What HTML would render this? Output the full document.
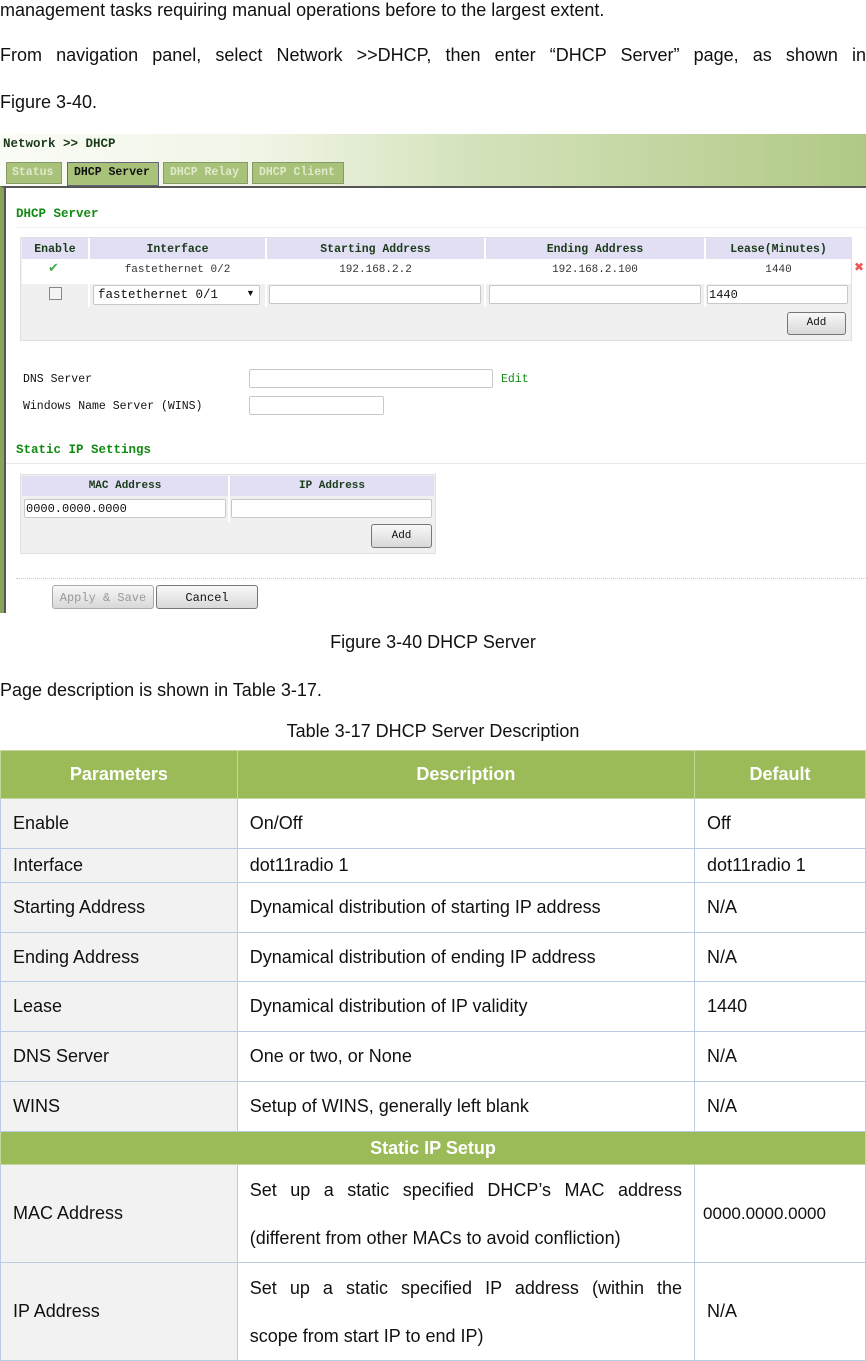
<!DOCTYPE html><html><head><meta charset="utf-8"><style>
*{margin:0;padding:0;box-sizing:border-box}
body{width:866px;height:1347px;overflow:hidden;background:#fff;position:relative;font-family:"Liberation Sans",sans-serif;color:#111}
.a{position:absolute;white-space:nowrap}
.t{font-size:18px}
.m{font-family:"Liberation Mono",monospace;font-size:11.5px}
.b{font-weight:bold}
.g{color:#138a13}
.inp{position:absolute;background:#fff;border:1px solid #c8c8c8;border-radius:2px}
.btn{position:absolute;border:1px solid #777;border-radius:3px;background:linear-gradient(#f8f8f8,#d8d8d8);font-family:"Liberation Mono",monospace;font-size:11px;text-align:center}
table.d{position:absolute;left:0;top:750px;width:866px;border-collapse:collapse;font-size:18px}
table.d td{border:1px solid #b8cce4;padding:0 12px;vertical-align:middle}
table.d td:first-child{background:#f2f2f2}
table.d tr.h td{background:#9bbb59;color:#fff;font-weight:bold;text-align:center;border-color:#c3d69b}
</style></head><body>
<div class="a t" style="left:0;top:0">management tasks requiring manual operations before to the largest extent.</div>
<div class="a t" style="left:0;top:45px;width:866px;text-align:justify;text-align-last:justify;word-spacing:2px">From navigation panel, select Network &gt;&gt;DHCP, then enter “DHCP Server” page, as shown in</div>
<div class="a t" style="left:0;top:92px">Figure 3-40.</div>

<div class="a" style="left:0;top:134px;width:866px;height:52px;background:linear-gradient(90deg,#fafcf6 0%,#f0f5e6 30%,#d4e2bb 55%,#b0c985 100%)"></div>
<div class="a m b" style="left:3px;top:137px;color:#1a3a1a;font-size:12.5px">Network &gt;&gt; DHCP</div>
<div class="a m b" style="left:6px;top:162px;width:56px;height:22px;background:#a8c27a;border:1px solid #889a66;color:#e0ead0;padding:3px 0 0 5px">Status</div>
<div class="a m b" style="left:67px;top:162px;width:92px;height:24px;background:#a8c27a;border:1px solid #667;color:#111;padding:3px 0 0 6px">DHCP Server</div>
<div class="a m b" style="left:163px;top:162px;width:85px;height:22px;background:#a8c27a;border:1px solid #889a66;color:#dfe9cc;padding:3px 0 0 6px">DHCP Relay</div>
<div class="a m b" style="left:252px;top:162px;width:92px;height:22px;background:#a8c27a;border:1px solid #889a66;color:#dfe9cc;padding:3px 0 0 6px">DHCP Client</div>
<div class="a" style="left:0;top:186px;width:866px;height:427px;border-top:2px solid #555;border-left:4px solid #8aa35a"></div>
<div class="a" style="left:4px;top:188px;width:2px;height:425px;background:#555"></div>
<div class="a m b g" style="left:16px;top:207px;font-size:12.5px">DHCP Server</div>
<div class="a" style="left:16px;top:227px;width:850px;height:1px;background:#eee"></div>
<div class="a" style="left:20px;top:237px;width:832px;height:104px;background:#f0f0f0;border:1px solid #e0e0e0"></div>
<div class="a" style="left:22px;top:238px;width:829px;height:21px;background:#e2dff4"></div>
<div class="a" style="left:22px;top:259px;width:829px;height:25px;background:#fff"></div>
<div class="a" style="left:88px;top:238px;width:2px;height:69px;background:#fff"></div>
<div class="a" style="left:265px;top:238px;width:2px;height:69px;background:#fff"></div>
<div class="a" style="left:484px;top:238px;width:2px;height:69px;background:#fff"></div>
<div class="a" style="left:704px;top:238px;width:2px;height:69px;background:#fff"></div>
<div class="a m b" style="left:22px;top:243px;width:66px;text-align:center;color:#1a3a1a">Enable</div>
<div class="a m b" style="left:90px;top:243px;width:175px;text-align:center;color:#1a3a1a">Interface</div>
<div class="a m b" style="left:267px;top:243px;width:217px;text-align:center;color:#1a3a1a">Starting Address</div>
<div class="a m b" style="left:486px;top:243px;width:218px;text-align:center;color:#1a3a1a">Ending Address</div>
<div class="a m b" style="left:706px;top:243px;width:145px;text-align:center;color:#1a3a1a">Lease(Minutes)</div>
<div class="a" style="left:48px;top:260px;color:#4a4;font-size:13px">✔</div>
<div class="a m" style="left:90px;top:264px;width:175px;text-align:center;color:#333;font-size:11px">fastethernet 0/2</div>
<div class="a m" style="left:267px;top:264px;width:217px;text-align:center;color:#333;font-size:11px">192.168.2.2</div>
<div class="a m" style="left:486px;top:264px;width:218px;text-align:center;color:#333;font-size:11px">192.168.2.100</div>
<div class="a m" style="left:706px;top:264px;width:145px;text-align:center;color:#333;font-size:11px">1440</div>
<div class="a" style="left:854px;top:260px;color:#e55;font-size:12px">✖</div>
<div class="a" style="left:49px;top:287px;width:13px;height:13px;border:1px solid #888;background:#f4f4f4"></div>
<div class="inp" style="left:93px;top:285px;width:167px;height:20px"><span class="a m" style="left:4px;top:2px;font-size:12.5px;color:#111">fastethernet 0/1</span><span class="a" style="left:152px;top:2px;font-size:9px">▼</span></div>
<div class="inp" style="left:269px;top:285px;width:212px;height:19px"></div>
<div class="inp" style="left:489px;top:285px;width:212px;height:19px"></div>
<div class="inp" style="left:707px;top:285px;width:141px;height:19px"><span class="a m" style="left:1px;top:2px;font-size:12px">1440</span></div>
<div class="btn" style="left:787px;top:312px;width:59px;height:23px;padding-top:4px">Add</div>

<div class="a m" style="left:23px;top:373px">DNS Server</div>
<div class="inp" style="left:249px;top:369px;width:244px;height:19px"></div>
<div class="a m g" style="left:501px;top:373px">Edit</div>
<div class="a m" style="left:23px;top:400px">Windows Name Server (WINS)</div>
<div class="inp" style="left:249px;top:396px;width:135px;height:19px"></div>
<div class="a m b g" style="left:16px;top:443px;font-size:12.5px">Static IP Settings</div>
<div class="a" style="left:6px;top:463px;width:860px;height:1px;background:#e8e8e8"></div>
<div class="a" style="left:20px;top:474px;width:416px;height:80px;background:#f0f0f0;border:1px solid #e0e0e0"></div>
<div class="a" style="left:22px;top:476px;width:412px;height:20px;background:#e2dff4"></div>
<div class="a" style="left:228px;top:476px;width:2px;height:46px;background:#fff"></div>
<div class="a m b" style="left:22px;top:480px;width:206px;text-align:center;color:#1a3a1a;font-size:11px">MAC Address</div>
<div class="a m b" style="left:230px;top:480px;width:204px;text-align:center;color:#1a3a1a;font-size:11px">IP Address</div>
<div class="inp" style="left:24px;top:499px;width:202px;height:19px"><span class="a m" style="left:1px;top:2px;font-size:12px">0000.0000.0000</span></div>
<div class="inp" style="left:231px;top:499px;width:201px;height:19px"></div>
<div class="btn" style="left:371px;top:524px;width:61px;height:24px;padding-top:5px">Add</div>
<div class="a" style="left:16px;top:578px;width:850px;border-top:1px dotted #ccc"></div>
<div class="btn" style="left:52px;top:585px;width:102px;height:24px;padding-top:5px;color:#999;border-color:#aaa;font-size:12px">Apply &amp; Save</div>
<div class="btn" style="left:156px;top:585px;width:102px;height:24px;padding-top:5px;font-size:12px">Cancel</div>

<div class="a t" style="left:0;top:632px;width:866px;text-align:center">Figure 3-40 DHCP Server</div>
<div class="a t" style="left:0;top:680px">Page description is shown in Table 3-17.</div>
<div class="a t" style="left:0;top:721px;width:866px;text-align:center">Table 3-17 DHCP Server Description</div>

<table class="d">
<colgroup><col style="width:237px"><col style="width:458px"><col style="width:171px"></colgroup>
<tr class="h" style="height:48px"><td>Parameters</td><td>Description</td><td>Default</td></tr>
<tr style="height:50px"><td>Enable</td><td>On/Off</td><td>Off</td></tr>
<tr style="height:34px"><td>Interface</td><td>dot11radio 1</td><td>dot11radio 1</td></tr>
<tr style="height:50px"><td>Starting Address</td><td>Dynamical distribution of starting IP address</td><td>N/A</td></tr>
<tr style="height:49px"><td>Ending Address</td><td>Dynamical distribution of ending IP address</td><td>N/A</td></tr>
<tr style="height:50px"><td>Lease</td><td>Dynamical distribution of IP validity</td><td>1440</td></tr>
<tr style="height:50px"><td>DNS Server</td><td>One or two, or None</td><td>N/A</td></tr>
<tr style="height:50px"><td>WINS</td><td>Setup of WINS, generally left blank</td><td>N/A</td></tr>
<tr class="h" style="height:33px"><td colspan="3">Static IP Setup</td></tr>
<tr style="height:98px"><td>MAC Address</td><td style="line-height:48px;text-align:justify"><div style="text-align-last:justify">Set up a static specified DHCP’s MAC address</div><div>(different from other MACs to avoid confliction)</div></td><td style="font-size:17px;padding:0 8px">0000.0000.0000</td></tr>
<tr style="height:98px"><td>IP Address</td><td style="line-height:48px"><div style="text-align:justify;text-align-last:justify">Set up a static specified IP address (within the</div><div>scope from start IP to end IP)</div></td><td>N/A</td></tr>
</table>
</body></html>
